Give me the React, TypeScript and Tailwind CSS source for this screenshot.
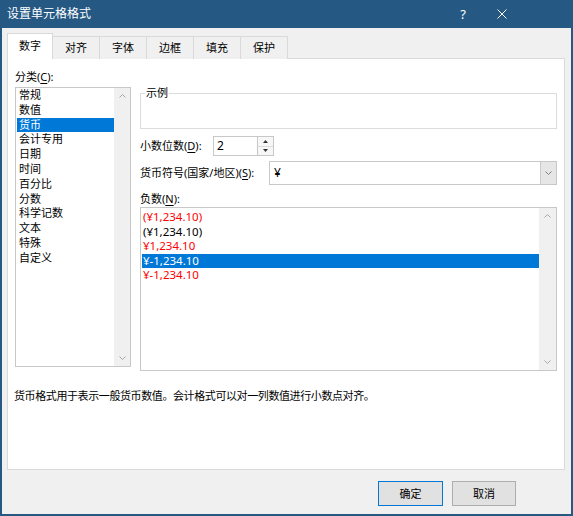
import React from "react";

function ChevUp() {
  return (
    <svg width="7" height="4" viewBox="0 0 7 4" className="block">
      <polyline points="0.5,3.5 3.5,0.5 6.5,3.5" fill="none" stroke="#a6a6a6" strokeWidth="1" />
    </svg>
  );
}
function ChevDown({ color = "#a6a6a6" }: { color?: string }) {
  return (
    <svg width="7" height="4" viewBox="0 0 7 4" className="block">
      <polyline points="0.5,0.5 3.5,3.5 6.5,0.5" fill="none" stroke={color} strokeWidth="1" />
    </svg>
  );
}

function Scrollbar({ w }: { w: string }) {
  return (
    <div className={`${w} bg-[#f0f0f0] flex flex-col items-center justify-between py-[6px]`}>
      <ChevUp />
      <ChevDown />
    </div>
  );
}

const categories = ["常规", "数值", "货币", "会计专用", "日期", "时间", "百分比", "分数", "科学记数", "文本", "特殊", "自定义"];

const negs = [
  { t: "(¥1,234.10)", red: true },
  { t: "(¥1,234.10)", red: false },
  { t: "¥1,234.10", red: true },
  { t: "¥-1,234.10", red: false, sel: true },
  { t: "¥-1,234.10", red: true },
];

const tabs = ["数字", "对齐", "字体", "边框", "填充", "保护"];

export default function App() {
  return (
    <div className="w-[573px] h-[516px] bg-[#255983] px-[2px] pb-[2px] flex flex-col font-[family-name:'Noto_Sans','Noto_Sans_CJK_SC',sans-serif] text-[11px] text-black">
      {/* title bar */}
      <div className="h-[28px] flex items-center text-white">
        <span className="pl-[5px] text-[12px] leading-[16px] flex-1">设置单元格格式</span>
        <span className="w-[20px] text-center text-[13px] leading-[16px]">?</span>
        <div className="w-[20px] ml-[19px] mr-[59px] flex justify-center">
          <svg width="10" height="10" viewBox="0 0 10 10">
            <line x1="0.5" y1="0.5" x2="9.5" y2="9.5" stroke="white" strokeWidth="1" />
            <line x1="9.5" y1="0.5" x2="0.5" y2="9.5" stroke="white" strokeWidth="1" />
          </svg>
        </div>
      </div>

      {/* body */}
      <div className="flex-1 bg-[#f0f0f0] px-[5px] pt-[6px] flex flex-col">
        {/* tabs */}
        <div className="flex items-end h-[25px] relative z-10 -mb-px">
          {tabs.map((t, i) =>
            i === 0 ? (
              <div key={t} className="w-[46px] h-[26px] bg-white border border-b-0 border-[#d9d9d9] flex items-center justify-center leading-[16px] pb-[1px]">
                {t}
              </div>
            ) : (
              <div key={t} className="w-[47px] h-[23px] bg-[#f0f0f0] border border-l-0 border-b-0 border-[#d9d9d9] flex items-center justify-center leading-[16px]">
                {t}
              </div>
            )
          )}
        </div>

        {/* panel */}
        <div className="w-[558px] h-[412px] bg-white border border-[#d9d9d9] flex flex-col">
          <div className="flex gap-[9px] pl-[7px] pt-[9px]">
            {/* left column */}
            <div className="w-[116px] flex flex-col">
              <div className="h-[18px] leading-[18px]">
                分类(<span className="underline underline-offset-2">C</span>):
              </div>
              <div className="mt-[1px] h-[280px] border border-[#c8c8c8] flex">
                <div className="flex-1 pl-px">
                  {categories.map((c) => (
                    <div
                      key={c}
                      className={`h-[14.8px] leading-[14.8px] pl-[2px] ${c === "货币" ? "bg-[#0078d7] text-white" : ""}`}
                    >
                      {c}
                    </div>
                  ))}
                </div>
                <Scrollbar w="w-[16px]" />
              </div>
            </div>

            {/* right column */}
            <div className="w-[417px] flex flex-col">
              <div className="mt-[25px] h-[36px] border border-[#dcdcdc] relative">
                <span className="absolute left-[4px] -top-[9px] bg-white px-px leading-[16px]">示例</span>
              </div>

              <div className="mt-[7px] h-[20px] flex items-center">
                <div className="w-[73px] leading-[16px]">
                  小数位数(<span className="underline underline-offset-2">D</span>):
                </div>
                <div className="w-[61px] h-[20px] border border-[#c8c8c8] flex">
                  <div className="flex-1 pl-[3px] text-[12px] leading-[18px]">2</div>
                  <div className="w-[16px] flex flex-col border-l border-[#c8c8c8]">
                    <div className="flex-1 flex items-center justify-center border-b border-[#dcdcdc] bg-[#f7f7f7]">
                      <svg width="5" height="3" viewBox="0 0 5 3"><polygon points="0,3 2.5,0 5,3" fill="#333" /></svg>
                    </div>
                    <div className="flex-1 flex items-center justify-center bg-[#f7f7f7]">
                      <svg width="5" height="3" viewBox="0 0 5 3"><polygon points="0,0 2.5,3 5,0" fill="#333" /></svg>
                    </div>
                  </div>
                </div>
              </div>

              <div className="mt-[5px] h-[24px] flex items-center">
                <div className="w-[129px] leading-[16px]">
                  货币符号(国家/地区)(<span className="underline underline-offset-2">S</span>):
                </div>
                <div className="flex-1 h-[24px] border border-[#c8c8c8] flex">
                  <div className="flex-1 pl-[4px] text-[12px] leading-[22px]">¥</div>
                  <div className="w-[16px] bg-[#e6e6e6] border-l border-[#cccccc] flex items-center justify-center">
                    <ChevDown color="#808080" />
                  </div>
                </div>
              </div>

              <div className="mt-[6px] h-[16px] leading-[16px]">
                负数(<span className="underline underline-offset-2">N</span>):
              </div>
              <div className="h-[164px] border border-[#c8c8c8] flex">
                <div className="flex-1 pt-[2px] pl-px text-[11.5px]">
                  {negs.map((n, i) => (
                    <div
                      key={i}
                      className={`h-[14.6px] leading-[14.6px] pl-px ${
                        n.sel ? "bg-[#0078d7] text-white" : n.red ? "text-[#ff0000]" : "text-black"
                      }`}
                    >
                      {n.t}
                    </div>
                  ))}
                </div>
                <Scrollbar w="w-[17px]" />
              </div>
            </div>
          </div>

          <div className="mt-[17px] pl-[6px] leading-[16px] tracking-[-0.4px]">
            货币格式用于表示一般货币数值。会计格式可以对一列数值进行小数点对齐。
          </div>
        </div>

        {/* buttons */}
        <div className="mt-[11px] flex justify-end gap-[9px] pr-[50px]">
          <div className="w-[65px] h-[25px] bg-[#e1e1e1] border border-[#0078d7] flex items-center justify-center leading-[16px]">
            确定
          </div>
          <div className="w-[64px] h-[25px] bg-[#e1e1e1] border border-[#adadad] flex items-center justify-center leading-[16px]">
            取消
          </div>
        </div>
      </div>
    </div>
  );
}
